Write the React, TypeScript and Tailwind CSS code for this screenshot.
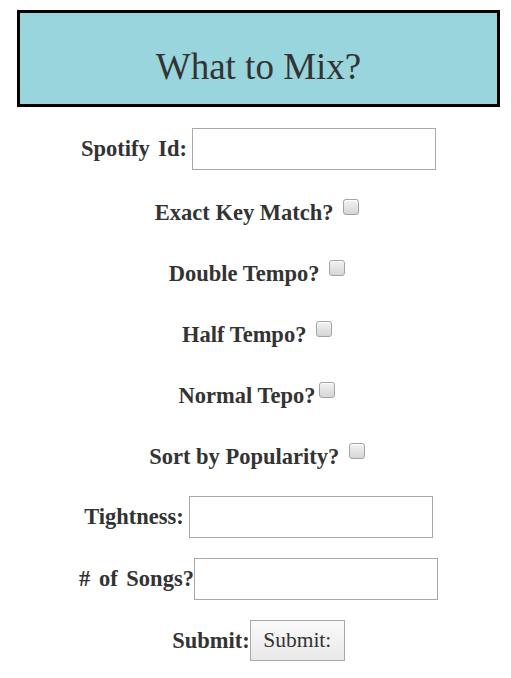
import React from 'react';

const font = { fontFamily: '"Liberation Serif", "Times New Roman", serif' };

const Check = () => (
  <input
    type="checkbox"
    className="appearance-none inline-block w-4 h-4 m-[3px_3px_5px_4px] align-baseline rounded-[3px] border border-[#a3a3a3] bg-gradient-to-b from-[#f2f2f2] to-[#d6d6d6] shadow-[inset_0_1px_0_#fff]"
  />
);

const CheckRow = ({ label, mt, space = true }: { label: string; mt: string; space?: boolean }) => (
  <div className={`h-[24px] leading-[24px] text-center text-[22.5px] font-bold text-[#333] ${mt}`}>
    {label}
    {space ? ' ' : ''}
    <Check />
  </div>
);

const TextRow = ({ label, mt, gap }: { label: string; mt: string; gap: string }) => (
  <div className={`flex items-center justify-center ${gap} ${mt}`}>
    <label className="text-[22.5px] font-bold text-[#333] leading-[24px] [word-spacing:3px]">{label}</label>
    <input type="text" className="w-[244px] h-[42px] border border-[#a9a9a9] bg-white" />
  </div>
);

export default function App() {
  return (
    <div className="bg-white min-h-[678px] pt-[10px]" style={font}>
      <div className="ml-[17px] w-[483px]">
        <div className="h-[97px] border-[3px] border-black bg-[#99d5dd] pt-[33px] text-center">
          <h1 className="text-[37px] leading-[42px] text-[#333]">What to Mix?</h1>
        </div>

        <TextRow label="Spotify Id:" mt="mt-[21px]" gap="gap-[5px]" />
        <CheckRow label="Exact Key Match?" mt="mt-[26px]" />
        <CheckRow label="Double Tempo?" mt="mt-[37px]" />
        <CheckRow label="Half Tempo?" mt="mt-[37px]" />
        <CheckRow label="Normal Tepo?" mt="mt-[37px]" space={false} />
        <CheckRow label="Sort by Popularity?" mt="mt-[37px]" />
        <TextRow label="Tightness:" mt="mt-[32px]" gap="gap-[5px]" />
        <TextRow label="# of Songs?" mt="mt-[20px]" gap="gap-0" />

        <div className="flex items-center justify-center mt-[20px]">
          <label className="text-[22.5px] font-bold text-[#333] leading-[24px]">Submit:</label>
          <button
            type="button"
            className="w-[95px] h-[41px] border border-[#a9a9a9] bg-gradient-to-b from-[#fafafa] to-[#e9e9e9] text-[21.5px] text-[#333]"
          >
            Submit:
          </button>
        </div>
      </div>
    </div>
  );
}
